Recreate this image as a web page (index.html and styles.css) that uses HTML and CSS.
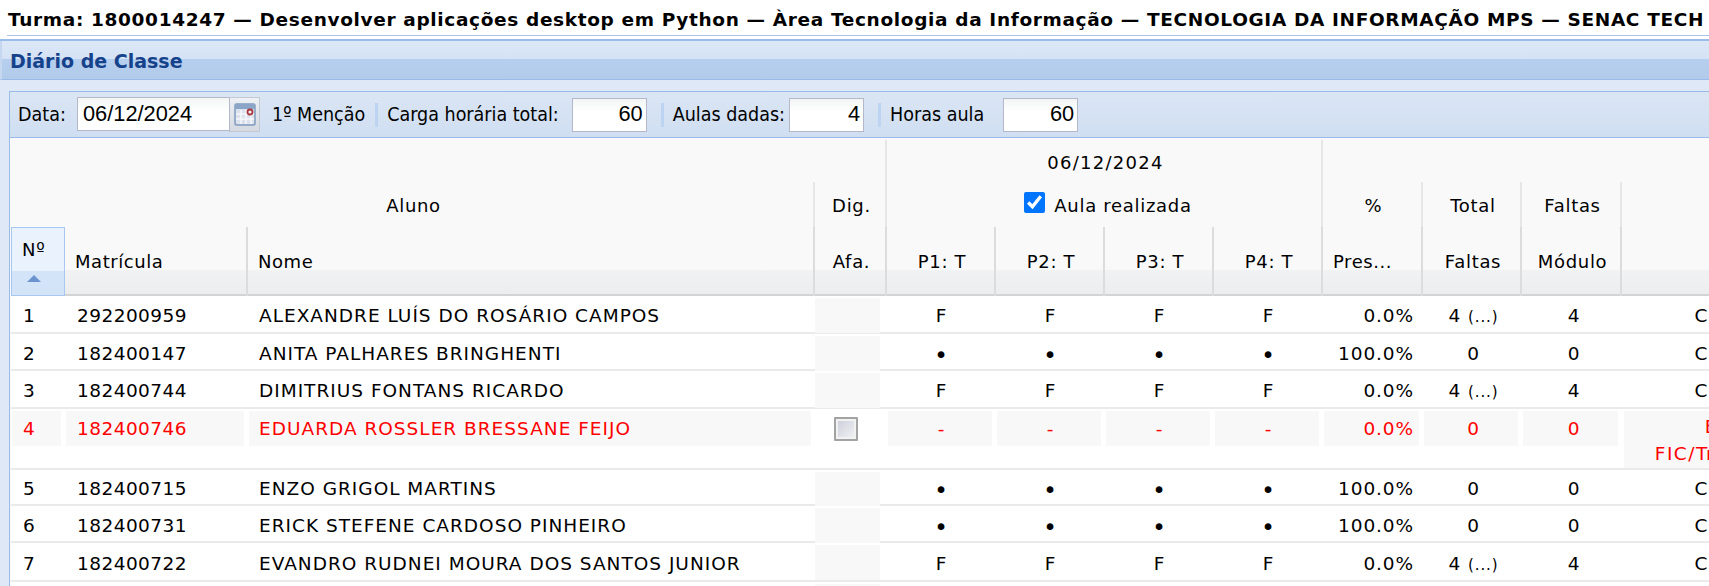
FILE: index.html
```html
<!DOCTYPE html>
<html lang="pt-BR">
<head>
  <meta charset="UTF-8" />
  <title>Diário de Classe</title>
  <link rel="stylesheet" href="styles.css">
</head>
<body>

  <!-- Turma -->
  <h1 class="turma">Turma: 1800014247 — Desenvolver aplicações desktop em Python — Àrea Tecnologia da Informação — TECNOLOGIA DA INFORMAÇÃO MPS — SENAC TECH</h1>

  <div class="panel">
    <h2 class="panel-title">Diário de Classe</h2>

    <div class="panel-body">
      <div class="box">

        <!-- Barra de ferramentas -->
        <div class="toolbar">
          <span class="tb-label tb-data">Data:</span>
          <div class="date-field">
            <input class="tb-input date-input" type="text" value="06/12/2024">
            <span class="date-trigger">
              <svg width="22" height="23" viewBox="0 0 22 23">
                <rect x="1" y="1" width="20" height="21" rx="1.5" fill="#dbe2ec" stroke="#7f9abd" stroke-width="1.5"/>
                <rect x="1" y="1" width="20" height="5" fill="#8ba5c8"/>
                <path d="M7 7v14M12 7v14M17 7v14M2 11h18M2 16h18" stroke="#f6f8fb" stroke-width="1.5"/>
                <circle cx="16" cy="9" r="2.5" fill="#f3f3f3" stroke="#a8393f" stroke-width="1.8"/>
              </svg>
            </span>
          </div>
          <span class="tb-label tb-mencao">1º Menção</span>
          <span class="tb-sep"></span>
          <span class="tb-label">Carga horária total:</span>
          <input class="tb-input num-input gap-carga" type="text" value="60">
          <span class="tb-sep"></span>
          <span class="tb-label">Aulas dadas:</span>
          <input class="tb-input num-input gap-aulas" type="text" value="4">
          <span class="tb-sep"></span>
          <span class="tb-label">Horas aula</span>
          <input class="tb-input num-input gap-horas" type="text" value="60">
        </div>

        <!-- Tabela de alunos -->
        <div class="grid-wrap">
          <table class="grid">
            <colgroup>
              <col class="c-num"><col class="c-mat"><col class="c-nome"><col class="c-afa">
              <col class="c-p"><col class="c-p"><col class="c-p"><col class="c-p">
              <col class="c-pres"><col class="c-faltas"><col class="c-mod"><col class="c-sit">
            </colgroup>
            <thead>
              <tr class="h1">
                <th colspan="4" class="sep"></th>
                <th colspan="4" class="sep date-head">06/12/2024</th>
                <th colspan="4"></th>
              </tr>
              <tr class="h2">
                <th colspan="3" class="sep">Aluno</th>
                <th class="sep">Dig.</th>
                <th colspan="4" class="sep realizada-head">
                  <label class="realizada"><input type="checkbox" checked> Aula realizada</label>
                </th>
                <th class="sep">%</th>
                <th class="sep">Total</th>
                <th class="sep">Faltas</th>
                <th></th>
              </tr>
              <tr class="h3">
                <th class="sorted">Nº<span class="arrow"></span></th>
                <th class="sep left">Matrícula</th>
                <th class="sep left">Nome</th>
                <th class="sep">Afa.</th>
                <th class="sep">P1: T</th>
                <th class="sep">P2: T</th>
                <th class="sep">P3: T</th>
                <th class="sep">P4: T</th>
                <th class="sep left">Pres...</th>
                <th class="sep">Faltas</th>
                <th class="sep">Módulo</th>
                <th></th>
              </tr>
            </thead>
            <tbody>
              <tr class="r38">
                <td class="num">1</td><td class="mat">292200959</td><td class="nome">ALEXANDRE LUÍS DO ROSÁRIO CAMPOS</td><td class="fill afa"></td>
                <td>F</td><td>F</td><td>F</td><td>F</td>
                <td class="pres">0.0%</td><td class="tot">4 <small>(...)</small></td><td class="mod">4</td><td>Cursando</td>
              </tr>
              <tr class="r37">
                <td class="num">2</td><td class="mat">182400147</td><td class="nome">ANITA PALHARES BRINGHENTI</td><td class="fill afa"></td>
                <td class="dot">•</td><td class="dot">•</td><td class="dot">•</td><td class="dot">•</td>
                <td class="pres">100.0%</td><td class="tot">0</td><td class="mod">0</td><td>Cursando</td>
              </tr>
              <tr class="r38">
                <td class="num">3</td><td class="mat">182400744</td><td class="nome">DIMITRIUS FONTANS RICARDO</td><td class="fill afa"></td>
                <td>F</td><td>F</td><td>F</td><td>F</td>
                <td class="pres">0.0%</td><td class="tot">4 <small>(...)</small></td><td class="mod">4</td><td>Cursando</td>
              </tr>
              <tr class="inativo">
                <td class="num fill">4</td><td class="mat fill">182400746</td><td class="nome fill">EDUARDA ROSSLER BRESSANE FEIJO</td>
                <td><span class="afa-check"></span></td>
                <td class="fill">-</td><td class="fill">-</td><td class="fill">-</td><td class="fill">-</td>
                <td class="pres fill">0.0%</td><td class="tot fill">0</td><td class="mod fill">0</td><td class="sit-fill">Evadido<br>FIC/Transferência</td>
              </tr>
              <tr class="r36">
                <td class="num">5</td><td class="mat">182400715</td><td class="nome">ENZO GRIGOL MARTINS</td><td class="fill afa"></td>
                <td class="dot">•</td><td class="dot">•</td><td class="dot">•</td><td class="dot">•</td>
                <td class="pres">100.0%</td><td class="tot">0</td><td class="mod">0</td><td>Cursando</td>
              </tr>
              <tr class="r37">
                <td class="num">6</td><td class="mat">182400731</td><td class="nome">ERICK STEFENE CARDOSO PINHEIRO</td><td class="fill afa"></td>
                <td class="dot">•</td><td class="dot">•</td><td class="dot">•</td><td class="dot">•</td>
                <td class="pres">100.0%</td><td class="tot">0</td><td class="mod">0</td><td>Cursando</td>
              </tr>
              <tr class="r39">
                <td class="num">7</td><td class="mat">182400722</td><td class="nome">EVANDRO RUDNEI MOURA DOS SANTOS JUNIOR</td><td class="fill afa"></td>
                <td>F</td><td>F</td><td>F</td><td>F</td>
                <td class="pres">0.0%</td><td class="tot">4 <small>(...)</small></td><td class="mod">4</td><td>Cursando</td>
              </tr>
              <tr class="r38">
                <td colspan="3"></td><td class="fill afa"></td><td colspan="8"></td>
              </tr>
            </tbody>
          </table>
        </div>

      </div>
    </div>
  </div>

</body>
</html>
```

FILE: styles.css
```css
/* Base */
* {
  margin: 0;
  padding: 0;
  box-sizing: border-box;
}

body {
  font-family: "DejaVu Sans", Verdana, sans-serif;
  font-size: 16px;
  color: #000;
  background: #fff;
  height: 586px;
  overflow: hidden;
}

/* Turma */
.turma {
  margin-left: 7px;
  height: 36px;
  padding: 9px 0 0 1px;
  font-size: 18.5px;
  letter-spacing: 0.65px;
  line-height: 22px;
  font-weight: bold;
  white-space: nowrap;
  overflow: hidden;
  border-bottom: 1px solid #a9c2e8;
}

/* Painel */
.panel {
  margin-top: 3px;
  border-top: 2px solid #99bbe8;
  background: #dfe8f6;
}

.panel-title {
  height: 39px;
  padding-left: 8px;
  font-size: 19px;
  line-height: 40px;
  font-weight: bold;
  color: #15428b;
  background: linear-gradient(#dce8f7, #d4e2f5 48%, #b7cfee 48%, #b3cbeb);
  border-bottom: 1px solid #99bbe8;
  border-left: 2px solid #c5d8f0;
}

.panel-body {
  padding: 11px 0 0 9px;
}

.box {
  border-left: 1px solid #99bbe8;
  border-top: 1px solid #99bbe8;
}

/* Barra de ferramentas */
.toolbar {
  display: flex;
  align-items: center;
  height: 46px;
  padding-left: 8px;
  font-family: "DejaVu Sans Condensed", "DejaVu Sans", sans-serif;
  font-stretch: condensed;
  background: linear-gradient(#dbe6f4, #cfdef2);
  border-bottom: 1px solid #99bbe8;
}

.tb-label {
  white-space: nowrap;
  font-size: 19.5px;
}

.tb-data {
  width: 59px;
}

.tb-mencao {
  margin-left: 12px;
}

.tb-sep {
  width: 3px;
  height: 24px;
  margin: 0 9px 0 10px;
  background: #bcd3f2;
}

.tb-input {
  height: 34px;
  border: 1px solid #b5b8c8;
  background: linear-gradient(#f3f5f5, #fff 40%);
  font-family: "Liberation Sans", Arial, sans-serif;
  font-size: 21.8px;
  outline: none;
}

.date-field {
  display: flex;
  align-items: flex-start;
}

.date-input {
  width: 152px;
  padding: 0 0 1px 5px;
  border-right: none;
}

.date-trigger {
  width: 31px;
  height: 35px;
  display: flex;
  align-items: center;
  justify-content: center;
  background: linear-gradient(#edf0f4, #d5dae2);
  border: 1px solid #c3c8d2;
  border-left-color: #b5b8c8;
}

.num-input {
  width: 75px;
  padding: 0 3px 1px 0;
  text-align: right;
}

.gap-carga {
  margin-left: 13px;
  margin-right: 4px;
}

.gap-aulas {
  margin-left: 4px;
  margin-right: 4px;
}

.gap-horas {
  margin-left: 19px;
}

/* Tabela */
.grid-wrap {
  padding: 2px 0 0 1px;
  background: #f9f9f9;
}

.grid {
  width: 1833px;
  table-layout: fixed;
  border-collapse: separate;
  border-spacing: 0;
}

.c-num { width: 54px; }
.c-mat { width: 183px; }
.c-nome { width: 567px; }
.c-afa { width: 72px; }
.c-p { width: 109px; }
.c-pres { width: 100px; }
.c-faltas { width: 99px; }
.c-mod { width: 100px; }
.c-sit { width: 240px; }

th {
  font-weight: normal;
  font-size: 18px;
  letter-spacing: 0.7px;
  white-space: nowrap;
  overflow: hidden;
  padding-left: 3px;
}

.h1 { height: 42px; }
.h2 { height: 45px; }
.h3 { height: 69px; }

.h1 th,
.h2 th {
  padding-top: 2px;
}

.sep {
  border-right: 2px solid #e6e6e6;
}

.date-head {
  letter-spacing: 1.3px;
}

.h2 .realizada-head {
  padding-left: 8px;
}

.h3 th {
  vertical-align: top;
  padding-top: 24px;
  line-height: 22px;
  background: linear-gradient(#f9f9f9 43px, #f1f2f3 43px, #ecedef 67px, #d3d3d3 67px);
}

.h3 .sep {
  border-right-color: #dcdcdc;
}

.h3 th.left {
  text-align: left;
  padding-left: 10px;
  letter-spacing: 0.55px;
}

.h3 th.sorted {
  position: relative;
  text-align: left;
  padding: 11px 0 0 10px;
  border: 1px solid #a8c8f0;
  background: linear-gradient(#e9f2fd 43px, #d3e4f9 43px);
  background-clip: padding-box;
}

.arrow {
  position: absolute;
  left: 15px;
  top: 47px;
  width: 0;
  height: 0;
  border-left: 7px solid transparent;
  border-right: 7px solid transparent;
  border-bottom: 7px solid #6b94cf;
}

.realizada {
  display: inline-flex;
  align-items: center;
  gap: 9px;
}

.realizada input {
  width: 21px;
  height: 21px;
  margin: 0 0 6px 0;
}

/* Linhas */
tbody {
  background: #fff;
}

.r36 { height: 36px; }
.r37 { height: 37px; }
.r38 { height: 38px; }
.r39 { height: 39px; }
.inativo { height: 61px; }

td {
  text-align: center;
  font-size: 18.5px;
  letter-spacing: 0.9px;
  white-space: nowrap;
  overflow: hidden;
  padding-top: 1px;
  background: linear-gradient(#eaeaea, #eaeaea) left bottom / 100% 2px no-repeat #fff;
}

td.fill {
  background:
    linear-gradient(#f8f8f8, #f8f8f8) 1px 2px / calc(100% - 5px) 35px no-repeat,
    linear-gradient(#eaeaea, #eaeaea) left bottom / 100% 2px no-repeat,
    #fff;
}

td.afa {
  background:
    linear-gradient(#f8f8f8, #f8f8f8) 0 2px / calc(100% - 7px) 35px no-repeat,
    linear-gradient(#eaeaea, #eaeaea) left bottom / 100% 2px no-repeat,
    #fff;
}

td.sit-fill {
  background:
    linear-gradient(#f8f8f8, #f8f8f8) 2px 2px / 100% 57px no-repeat,
    linear-gradient(#eaeaea, #eaeaea) left bottom / 100% 2px no-repeat,
    #fff;
}

.num,
.mat,
.nome {
  text-align: left;
}

.num { padding-left: 12px; }
.mat { padding-left: 12px; letter-spacing: 0.45px; }
.nome { padding-left: 11px; letter-spacing: 1px; }

.pres {
  text-align: right;
  padding-right: 9px;
}

.tot { padding-left: 2px; }
.mod { padding-left: 4px; }

td.dot {
  font-size: 23px;
  line-height: 20px;
  padding-top: 4px;
}

small {
  font-size: 15px;
}

/* Aluno afastado */
.inativo td {
  color: #f00;
  vertical-align: top;
  padding-top: 8px;
  line-height: 24px;
}

.inativo td.sit-fill {
  line-height: 27px;
  padding: 4px 0 2px 10px;
  letter-spacing: 1.5px;
}

.afa-check {
  display: block;
  width: 24px;
  height: 24px;
  margin: 0 0 0 19px;
  border: 2px solid #a3a3a3;
  border-radius: 1px;
  background: linear-gradient(135deg, #c9cdd8, #f4f4f6);
  box-shadow: inset 0 0 0 2px #f2f2f2;
}
```
